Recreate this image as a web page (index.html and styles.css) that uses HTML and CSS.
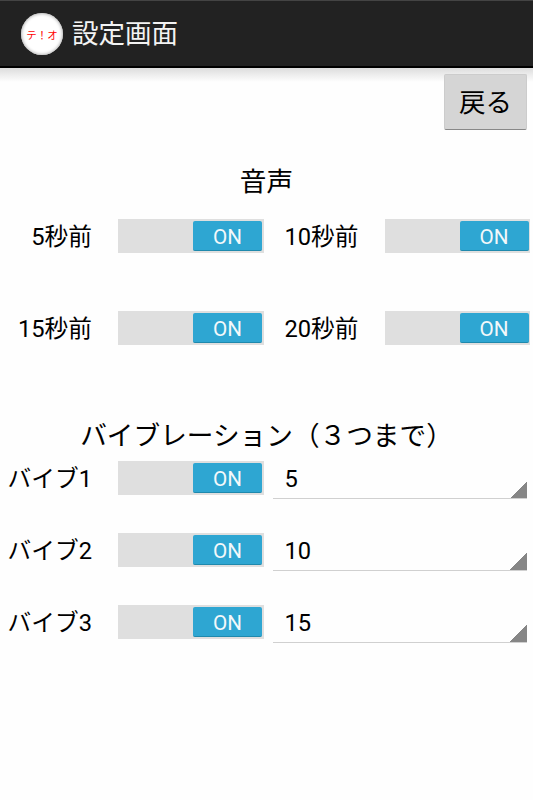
FILE: index.html
```html
<!DOCTYPE html>
<html lang="ja">
<head>
  <meta charset="UTF-8" />
  <meta name="viewport" content="width=device-width, initial-scale=1.0" />
  <title>設定画面</title>
  <link rel="stylesheet" href="styles.css">
</head>
<body>

<header>
  <div class="logo">テ！オ</div>
  <h1>設定画面</h1>
</header>

<main>
  <div class="toolbar">
    <button type="button" class="back">戻る</button>
  </div>

  <h2>音声</h2>
  <div class="voice">
    <div class="setting">
      <span class="label">5秒前</span>
      <div class="switch"><span class="thumb">ON</span></div>
    </div>
    <div class="setting">
      <span class="label">10秒前</span>
      <div class="switch"><span class="thumb">ON</span></div>
    </div>
    <div class="setting">
      <span class="label">15秒前</span>
      <div class="switch"><span class="thumb">ON</span></div>
    </div>
    <div class="setting">
      <span class="label">20秒前</span>
      <div class="switch"><span class="thumb">ON</span></div>
    </div>
  </div>

  <h2 class="vibe-title">バイブレーション（３つまで）</h2>
  <div class="vibe">
    <div class="setting">
      <span class="label">バイブ1</span>
      <div class="switch"><span class="thumb">ON</span></div>
      <div class="spinner">5</div>
    </div>
    <div class="setting">
      <span class="label">バイブ2</span>
      <div class="switch"><span class="thumb">ON</span></div>
      <div class="spinner">10</div>
    </div>
    <div class="setting">
      <span class="label">バイブ3</span>
      <div class="switch"><span class="thumb">ON</span></div>
      <div class="spinner">15</div>
    </div>
  </div>
</main>

</body>
</html>
```

FILE: styles.css
```css
* {
  box-sizing: border-box;
}

body {
  margin: 0;
  min-height: 100vh;
  font-family: Roboto, "Noto Sans CJK JP", sans-serif;
  color: #000;
  background: #fefefe;
}

header {
  display: flex;
  align-items: center;
  height: 68px;
  padding-left: 21px;
  background: #222;
  border-top: 1px solid #444;
  border-bottom: 2px solid #000;
}

.logo {
  display: flex;
  align-items: center;
  justify-content: center;
  width: 42px;
  height: 42px;
  margin-top: 1px;
  padding-top: 2px;
  border-radius: 50%;
  background: #fff;
  box-shadow: inset 0 0 3px 1px #bbb;
  color: #f00;
  font-family: "Noto Sans CJK JP", serif;
  font-size: 10.5px;
  line-height: 1;
  white-space: nowrap;
}

h1 {
  margin: 0 0 0 9px;
  color: #f3f3f3;
  font-size: 26.5px;
  font-weight: 400;
  line-height: 40px;
}

main {
  background: linear-gradient(#ddd, #fefefe 14px);
}

.toolbar {
  display: flex;
  justify-content: flex-end;
  padding: 6px 6px 0 0;
}

.back {
  width: 83px;
  height: 56px;
  padding: 0 0 4px;
  border: 1px solid #ccc;
  border-bottom-color: #888;
  border-radius: 2px;
  background: #d5d5d5;
  color: #000;
  font-family: inherit;
  font-size: 26.5px;
}

h2 {
  height: 40px;
  margin: 32px 0 0;
  font-size: 26.67px;
  font-weight: 400;
  line-height: 40px;
  text-align: center;
  white-space: nowrap;
}

.voice {
  display: grid;
  grid-template-columns: 266.5px 266.5px;
  row-gap: 58px;
  padding-top: 17px;
}

.setting {
  display: flex;
  align-items: center;
  height: 34px;
}

.label {
  width: 92px;
  margin-right: 26px;
  padding-top: 2px;
  font-size: 23.7px;
  line-height: 34px;
  text-align: right;
  white-space: nowrap;
}

.switch {
  display: flex;
  justify-content: flex-end;
  width: 145.5px;
  height: 34px;
  padding: 2px 1.5px 2px 0;
  background: #dfdfdf;
}

.thumb {
  width: 69px;
  height: 30px;
  border-bottom: 1px solid #1f89ad;
  border-radius: 2px;
  background: #2ea6d2;
  color: #f3f8fa;
  font-size: 20.7px;
  line-height: 32px;
  text-align: center;
}

.vibe-title {
  margin-top: 71px;
}

.vibe {
  display: flex;
  flex-direction: column;
  gap: 38px;
  padding-top: 5px;
}

.spinner {
  align-self: flex-start;
  width: 254.5px;
  height: 38px;
  margin-left: 9px;
  padding-left: 12px;
  border-bottom: 1px solid #d0d0d0;
  /* dropdown corner */
  background: linear-gradient(135deg, transparent 50%, #868686 50%) right bottom / 17px 17px no-repeat;
  font-size: 23.7px;
  line-height: 36px;
}
```
